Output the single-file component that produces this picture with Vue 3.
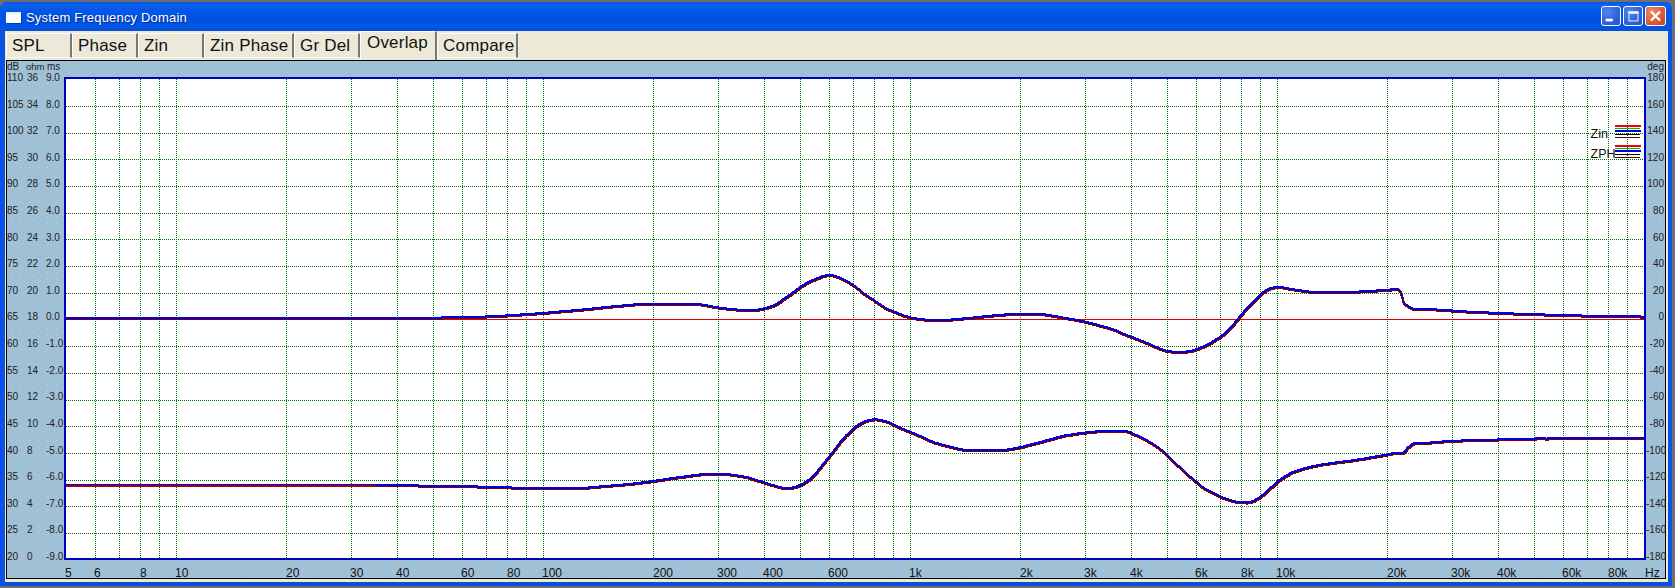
<template>
  <div class="screen">
    <div class="window">
      <div class="titlebar">
        <div class="title">
          <span class="win-icon"></span>
          <span>System Frequency Domain</span>
        </div>
        <div class="controls">
          <svg class="ctl blue" width="20" height="20" viewBox="0 0 20 20">
            <rect x="4" y="13" width="8" height="3" fill="#fff" />
          </svg>
          <svg class="ctl blue" width="20" height="20" viewBox="0 0 20 20">
            <rect x="5.5" y="5.5" width="10" height="10" fill="none" stroke="#fff" />
            <rect x="5" y="5" width="11" height="2.5" fill="#fff" />
          </svg>
          <svg class="ctl red" width="21" height="20" viewBox="0 0 21 20">
            <path d="M5.5 5 L15.5 15 M15.5 5 L5.5 15" stroke="#fff" stroke-width="2.4" fill="none" />
          </svg>
        </div>
      </div>
      <div class="body">
        <div class="tabs">
          <div
            v-for="tab in tabs"
            :key="tab.name"
            class="tab"
            :class="{ active: tab.name === 'Overlap' }"
            :style="{ width: tab.width + 'px' }"
          >{{ tab.name }}</div>
        </div>
        <div class="panel">
          <div class="axis-left">
            <div class="axis-head head-left"><span>dB</span><span>ohm</span><span>ms</span></div>
            <div class="ticks">
              <div v-for="row in leftRows" :key="row[0]" class="tick-row">
                <span>{{ row[0] }}</span><span>{{ row[1] }}</span><span>{{ row[2] }}</span>
              </div>
            </div>
          </div>
          <div class="plot">
            <svg width="1578" height="479" viewBox="0 0 1578 479" shape-rendering="crispEdges">
              <path :d="gridV" class="grid" />
              <path :d="gridH" class="grid" />
              <path d="M0 240.5 H1578" class="zero" />
              <path :d="upper.blue" class="curve-blue" />
              <path :d="upper.red" class="curve-red" />
              <path :d="lower.blue" class="curve-blue" />
              <path :d="lower.red" class="curve-red" />
              <rect x="0" y="406" width="309" height="2" fill="#a80000" />
              <g v-for="(y, i) in [0, 20]" :key="i">
                <rect x="1549" :y="46 + y" width="26" height="2" fill="#f00000" />
                <rect x="1549" :y="49 + y" width="25" height="1" fill="#00c000" />
                <rect x="1549" :y="51 + y" width="26" height="2" fill="#0000e0" />
                <rect x="1549" :y="55 + y" width="25" height="1" fill="#000" />
                <rect x="1549" :y="58 + y" width="25" height="1" fill="#600000" />
              </g>
              <text x="1524.5" y="59" class="legend">Zin</text>
              <text x="1524.5" y="79" class="legend">ZPH</text>
            </svg>
          </div>
          <div class="axis-right">
            <div class="axis-head head-right">deg</div>
            <div class="ticks">
              <div v-for="d in degRows" :key="d" class="tick-deg">{{ d }}</div>
            </div>
          </div>
          <div class="axis-bottom">
            <span
              v-for="t in freqLabels"
              :key="t.text"
              class="freq"
              :style="{ left: t.left + 'px' }"
            >{{ t.text }}</span>
          </div>
        </div>
      </div>
    </div>
  </div>
</template>

<script setup>
const tabs = [
  { name: 'SPL', width: 66 },
  { name: 'Phase', width: 66 },
  { name: 'Zin', width: 66 },
  { name: 'Zin Phase', width: 90 },
  { name: 'Gr Del', width: 66 },
  { name: 'Overlap', width: 77 },
  { name: 'Compare', width: 81 }
]

const leftRows = []
for (let i = 0; i <= 18; i++) {
  leftRows.push([110 - i * 5, 36 - i * 2, (9 - i).toFixed(1)])
}
const degRows = []
for (let i = 0; i <= 18; i++) degRows.push(180 - i * 20)

// page x of a frequency, 5 Hz sits on the plot's left edge
const freqX = (f) => 65.8 + 367 * Math.log10(f / 5)
const PLOT_X = 66
const PLOT_Y = 79

let freqs = [6, 7, 8, 9]
for (const m of [10, 100, 1000, 10000]) {
  for (let k = 1; k <= 9; k++) freqs.push(k * m)
}
const gridV = freqs
  .map((f) => `M${Math.floor(freqX(f) + 0.2) - PLOT_X + 0.5} 0 V479`)
  .join(' ')

let h = ''
for (let i = 1; i < 18; i++) {
  if (i === 9) continue
  h += `M0 ${Math.floor(79.6 + 26.7 * i) - PLOT_Y + 0.5} H1578 `
}
const gridH = h

const fmt = (f) => (f >= 1000 ? f / 1000 + 'k' : String(f))
const labelled = [5, 6, 8, 10, 20, 30, 40, 60, 80, 100, 200, 300, 400, 600, 1000, 2000, 3000, 4000, 6000, 8000, 10000, 20000, 30000, 40000, 60000, 80000]
const freqLabels = labelled.map((f) => ({ text: fmt(f), left: Math.round(freqX(f)) - 65 }))
freqLabels.push({ text: 'Hz', left: 1581 })

// traced from the reference, page coordinates
const upperPts = [
  [66, 318], [420, 318.5], [429, 317.7], [473, 317], [498, 316], [517, 314.7], [532, 313.7], [547, 312.7],
  [557, 311.7], [570, 310.7], [580, 309.7], [591, 308.7], [599, 307.7], [610, 306.7], [620, 305.7], [631, 304.7],
  [643, 303.7], [693, 303.7], [703, 304.7], [712, 306.7], [727, 308.7], [737, 309.7], [759, 309.7], [763, 308.7],
  [770, 306.7], [777, 304], [783, 299.3], [790, 295], [798, 288.3], [808, 282], [817, 278.3], [826, 275],
  [830, 275], [835, 276], [847, 281.7], [855, 286.7], [863, 294], [873, 300], [883, 307.3], [893, 311.7],
  [903, 315.7], [913, 318.3], [925, 319.7], [950, 319.7], [965, 318.3], [978, 317], [990, 315.7], [1002, 314.7],
  [1013, 313.7], [1040, 313.7], [1052, 315.7], [1063, 317.7], [1075, 319.7], [1085, 321.7], [1097, 325],
  [1110, 328.3], [1123, 334], [1137, 339.3], [1150, 344.7], [1160, 349.3], [1170, 351.7], [1187, 351.7],
  [1197, 349.3], [1210, 343.3], [1223, 335], [1233, 325], [1242, 313.3], [1252, 303.3], [1262, 292.7],
  [1270, 288], [1278, 286.7], [1292, 289.3], [1313, 292.3], [1347, 292.3], [1372, 290.7], [1386, 290],
  [1395, 289], [1398, 289.3], [1401, 293.3], [1403, 303.3], [1407, 306], [1412, 308.7], [1427, 309],
  [1448, 310.3], [1468, 311.7], [1492, 312.7], [1518, 313.7], [1550, 314.7], [1588, 315.7], [1638, 316.3], [1644, 317]
]
const lowerPts = [
  [66, 484.6], [375, 485], [460, 486], [510, 487.5], [540, 488], [583, 488], [605, 486], [630, 484], [653, 481],
  [673, 478], [703, 474], [727, 474], [747, 477.3], [767, 483.7], [782, 488], [792, 488], [803, 484], [813, 476.7],
  [823, 464], [833, 451.7], [843, 438.3], [857, 425], [867, 420.3], [875, 419], [887, 421.7], [900, 428.3],
  [917, 435], [930, 441.3], [943, 445.3], [963, 450], [1005, 450], [1020, 447.3], [1043, 441.3], [1063, 435.7],
  [1083, 432.7], [1103, 430.7], [1125, 430.7], [1143, 438.3], [1160, 449.3], [1173, 461.7], [1187, 475],
  [1203, 488.3], [1222, 497.7], [1235, 502], [1250, 502.7], [1260, 497.3], [1270, 488.3], [1280, 479.3],
  [1293, 471.7], [1310, 466.7], [1320, 464.7], [1337, 462.3], [1355, 460], [1373, 457], [1388, 454.3],
  [1395, 452.7], [1403, 453.3], [1407, 448.3], [1413, 443.3], [1428, 442.7], [1445, 441.3], [1472, 440],
  [1507, 439.3], [1543, 438.3], [1547, 438.8], [1553, 438], [1644, 438]
]

// one y per pixel column, lightly smoothed so the trace has no corners
function sample(pts) {
  const raw = []
  let n = 0
  for (let x = PLOT_X; x <= 1644; x++) {
    while (n < pts.length - 2 && pts[n + 1][0] < x) n++
    const [x0, y0] = pts[n]
    const [x1, y1] = pts[n + 1]
    raw.push(y0 + ((x - x0) / (x1 - x0)) * (y1 - y0))
  }
  return raw.map((_, i) => {
    let sum = 0
    let c = 0
    const x = i + PLOT_X
    const r = x > 1392 && x < 1416 ? 1 : 4
    for (let j = i - r; j <= i + r; j++) {
      if (raw[j] !== undefined) {
        sum += raw[j]
        c++
      }
    }
    return sum / c
  })
}

function stepPath(ys, dx, dy) {
  let d = ''
  let last = null
  ys.forEach((v, i) => {
    const y = Math.round(v) - PLOT_Y + dy
    if (last === null) d = `M0 ${y}`
    else if (y !== last) d += ` H${i + dx} V${y}`
    last = y
  })
  return d + ' H1578'
}

function trace(pts) {
  const ys = sample(pts)
  return { blue: stepPath(ys, 0, 0), red: stepPath(ys, 0.5, 1.5) }
}

const upper = trace(upperPts)
const lower = trace(lowerPts)
</script>

<style scoped>
.screen {
  width: 1675px;
  height: 588px;
  box-sizing: border-box;
  padding: 2px 3px 2px 0;
  background: #6f6f6f;
  font-family: "Liberation Sans", Arial, sans-serif;
}

.window {
  height: 100%;
  display: flex;
  flex-direction: column;
  border-radius: 7px 7px 0 0;
  background: linear-gradient(90deg, #0a4fe0 0, #0a55ee 3px, #0a4fd8 5px, #0a4fd8 99.6%, #0a55ee 100%);
  overflow: hidden;
}

.titlebar {
  height: 29px;
  flex: none;
  display: flex;
  align-items: center;
  justify-content: space-between;
  padding: 0 6px;
  background: linear-gradient(180deg, #0a56dc 0, #0a62ee 12%, #0056e6 32%, #0052e0 62%, #0056e6 88%, #0a4ed0 100%);
}

.title {
  display: flex;
  align-items: center;
  gap: 5px;
  margin-top: 1px;
  color: #fff;
  font-size: 13px;
  letter-spacing: 0.18px;
  text-shadow: 1px 1px 1px #0a2a90;
}

.win-icon {
  width: 15px;
  height: 11px;
  background: linear-gradient(180deg, #dfe8f8 0, #fff 30%);
  box-shadow: 1px 1px 0 #0a3aa8;
}

.controls {
  display: flex;
  gap: 2px;
  margin-top: -1px;
}

.ctl {
  display: block;
  box-sizing: border-box;
  border: 1px solid #fff;
  border-radius: 3px;
}

.ctl.blue {
  background: radial-gradient(circle at 30% 25%, #4f86f0 0, #2f62dc 60%, #2450c8 100%);
}

.ctl.red {
  background: radial-gradient(circle at 30% 25%, #ef8a68 0, #dd5a35 60%, #c4401f 100%);
}

.body {
  flex: 1;
  min-height: 0;
  display: flex;
  flex-direction: column;
  margin: 0 4px 4px 5px;
  background: #ece9d8;
}

.tabs {
  height: 29px;
  flex: none;
  display: flex;
  align-items: flex-start;
  padding-left: 1px;
}

.tab {
  box-sizing: border-box;
  height: 25px;
  margin-top: 2px;
  flex: none;
  padding: 1px 0 0 5px;
  border-top: 1px solid #fffef8;
  border-left: 1px solid #fffef8;
  border-bottom: 1px solid #fbfaf2;
  border-right: 2px solid #777;
  font-size: 17px;
  letter-spacing: 0.2px;
  line-height: 22px;
  color: #111;
  white-space: nowrap;
}

.tab.active {
  height: 29px;
  margin-top: 0;
  padding-top: 0;
  padding-left: 6px;
  border-bottom: none;
  line-height: 21px;
}

.panel {
  flex: 1;
  min-height: 0;
  margin: 0 2px 3px 1px;
  border: 1px solid #000;
  display: grid;
  grid-template-columns: 57px 1582px 19px;
  grid-template-rows: 16px 483px 18px;
  background-color: #a0c0d6;
  color: #222;
}

.axis-left,
.axis-right {
  grid-row: 1 / 4;
  min-height: 0;
  display: flex;
  flex-direction: column;
  font-size: 10px;
  line-height: 12px;
}

.axis-left {
  grid-column: 1;
  background-image: radial-gradient(rgba(255, 255, 255, 0.28) 0.6px, transparent 0.8px);
  background-size: 9px 7px;
  background-position: 0 12px;
}

.axis-right {
  grid-column: 3;
  background-image: radial-gradient(rgba(255, 255, 255, 0.28) 0.6px, transparent 0.8px);
  background-size: 9px 7px;
  background-position: 0 12px;
}

.axis-head {
  height: 11px;
  flex: none;
  white-space: nowrap;
}

.head-left {
  display: flex;
}

.head-left span:nth-child(1) {
  width: 19px;
}

.head-left span:nth-child(2) {
  width: 21px;
  font-size: 9.5px;
}

.head-right {
  text-align: right;
  padding-right: 1px;
}

.ticks {
  height: 491px;
  flex: none;
  display: flex;
  flex-direction: column;
  justify-content: space-between;
}

.tick-row {
  height: 12px;
  display: grid;
  grid-template-columns: 20px 19px 1fr;
  white-space: nowrap;
}

.tick-deg {
  height: 12px;
  text-align: right;
  padding-right: 1px;
  white-space: nowrap;
}

.plot {
  grid-column: 2;
  grid-row: 2;
  box-sizing: border-box;
  border: 2px solid #0000c0;
  background: #fff;
}

.plot svg {
  display: block;
}

.grid {
  fill: none;
  stroke: #007000;
  stroke-width: 1;
  stroke-dasharray: 1 1;
}

.zero {
  fill: none;
  stroke: #e00000;
  stroke-width: 1;
}

.curve-blue {
  fill: none;
  stroke: #0000e0;
  stroke-width: 2;
}

.curve-red {
  fill: none;
  stroke: #800000;
  stroke-width: 1;
}

.legend {
  font-size: 12.5px;
  fill: #111;
  shape-rendering: auto;
}

.axis-bottom {
  grid-column: 2 / 4;
  grid-row: 3;
  position: relative;
  background-image: radial-gradient(rgba(255, 255, 255, 0.28) 0.6px, transparent 0.8px);
  background-size: 9px 7px;
}

.freq {
  position: absolute;
  top: 7px;
  font-size: 12px;
  line-height: 13px;
  color: #111;
  white-space: nowrap;
}
</style>

<style>
html,
body {
  margin: 0;
  overflow: hidden;
}
</style>
